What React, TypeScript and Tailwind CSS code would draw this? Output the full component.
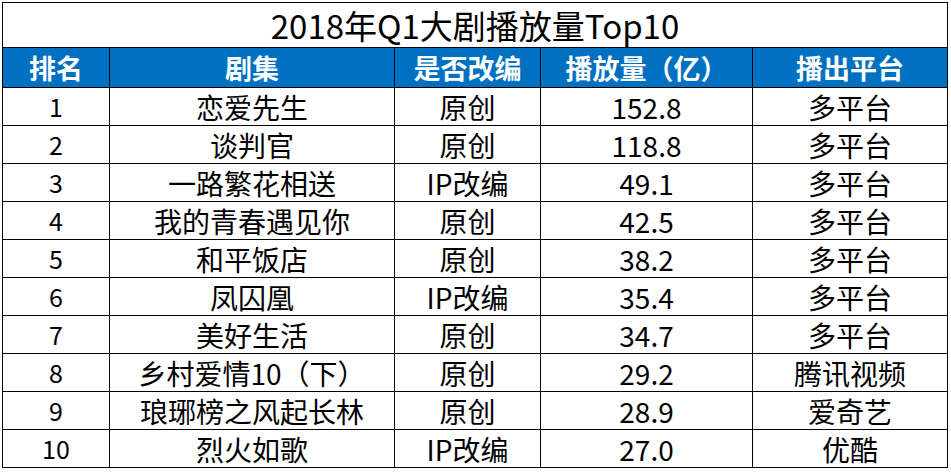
import React from "react";

const rows: [string, string, string, string, string][] = [
  ["1", "恋爱先生", "原创", "152.8", "多平台"],
  ["2", "谈判官", "原创", "118.8", "多平台"],
  ["3", "一路繁花相送", "IP改编", "49.1", "多平台"],
  ["4", "我的青春遇见你", "原创", "42.5", "多平台"],
  ["5", "和平饭店", "原创", "38.2", "多平台"],
  ["6", "凤囚凰", "IP改编", "35.4", "多平台"],
  ["7", "美好生活", "原创", "34.7", "多平台"],
  ["8", "乡村爱情10（下）", "原创", "29.2", "腾讯视频"],
  ["9", "琅琊榜之风起长林", "原创", "28.9", "爱奇艺"],
  ["10", "烈火如歌", "IP改编", "27.0", "优酷"],
];

const headers = ["排名", "剧集", "是否改编", "播放量（亿）", "播出平台"];

export default function App() {
  return (
    <div
      className="w-[951px] h-[472px] bg-white pt-[2px] pl-[2px]"
      style={{ fontFamily: '"Noto Sans CJK SC", "Noto Sans", sans-serif' }}
    >
      <div className="w-[946px] bg-black p-px grid grid-cols-[106px_284px_145px_211px_194px] gap-px">
        <div className="col-span-5 h-[44px] bg-white flex items-center justify-center text-[33px] leading-none text-black">
          2018年Q1大剧播放量Top10
        </div>
        {headers.map((h) => (
          <div
            key={h}
            className="h-[39px] bg-[#0070c0] flex items-center justify-center text-[27px] font-bold text-white leading-none"
          >
            {h}
          </div>
        ))}
        {rows.map((r) =>
          r.map((c, i) => (
            <div
              key={r[0] + "-" + i}
              className={
                "h-[37px] bg-white flex items-center justify-center text-black leading-none " +
                (i === 0 ? "text-[25px]" : "text-[28px]")
              }
            >
              {c}
            </div>
          ))
        )}
      </div>
    </div>
  );
}
